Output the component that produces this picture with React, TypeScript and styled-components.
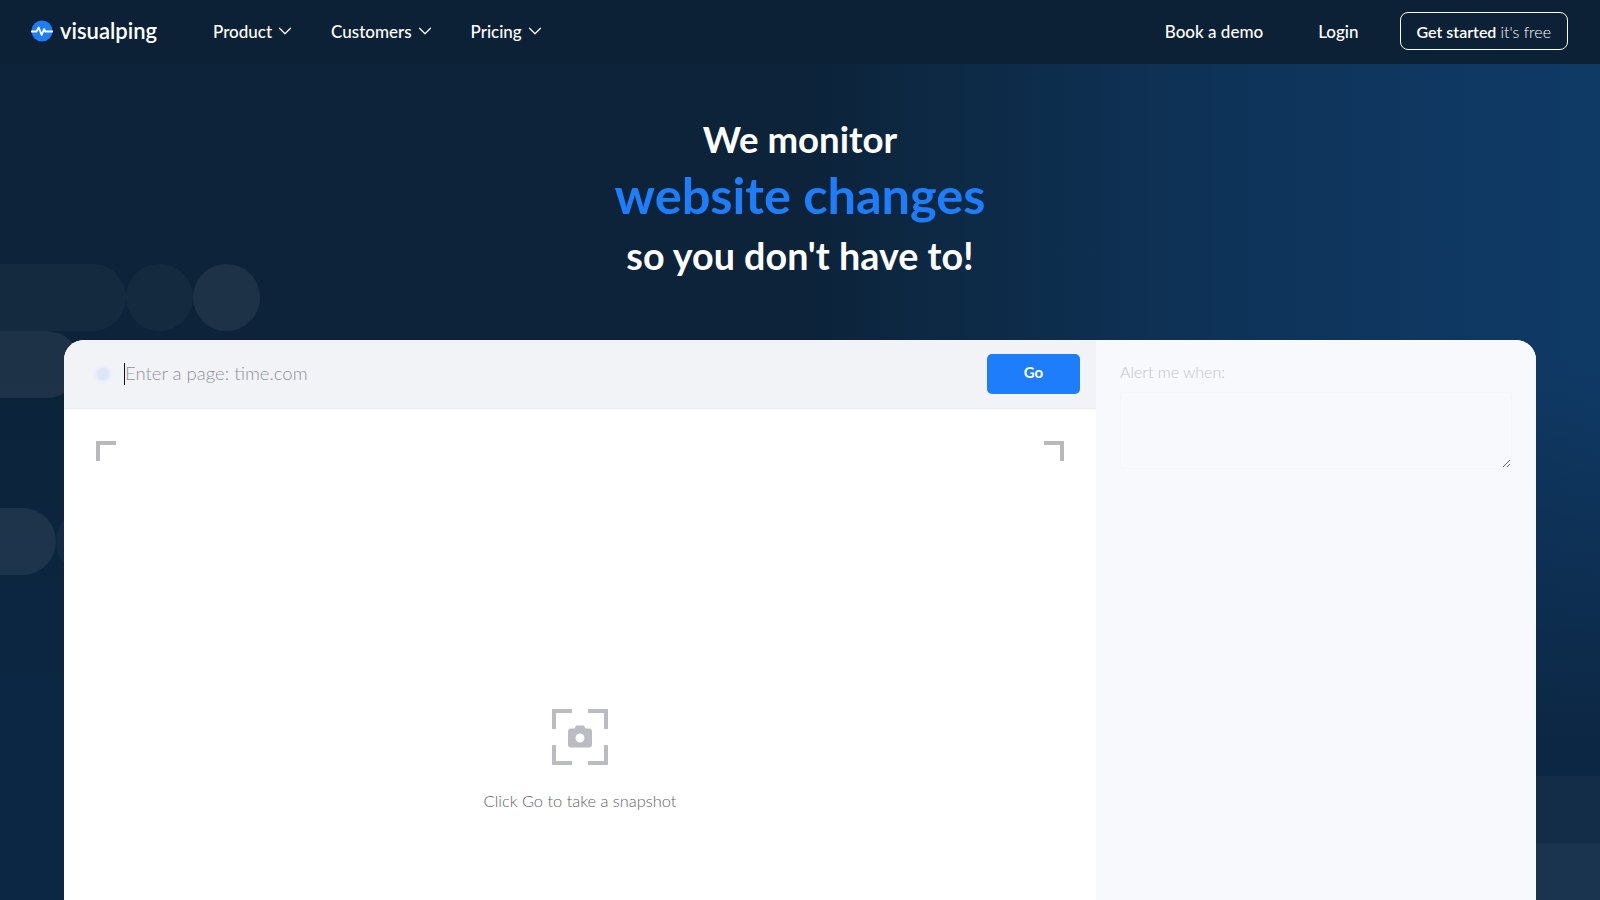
import React from 'react';
import styled, { createGlobalStyle } from 'styled-components';
import { ChevronDown } from 'lucide-react';

const GlobalStyle = createGlobalStyle`
  html, body {
    margin: 0;
    height: 100%;
    overflow: hidden;
    background: #0c2339;
  }
  * {
    box-sizing: border-box;
  }
`;

const NAV_LINKS = ['Product', 'Customers', 'Pricing'];

const BLOBS = [
  { left: -60, top: 264, width: 186, tint: 0.035 },
  { left: 126, top: 264, width: 67, tint: 0.035 },
  { left: 193, top: 264, width: 67, tint: 0.07 },
  { left: -60, top: 331, width: 140, tint: 0.07 },
  { left: -60, top: 508, width: 116, tint: 0.07 },
  { left: 56, top: 508, width: 67, tint: 0.03 },
  { left: 1500, top: 776, width: 200, tint: 0.03 },
  { left: 1500, top: 843, width: 200, tint: 0.06 },
];

const App = () => {
  return (
    <Page>
      <GlobalStyle />
      {BLOBS.map((blob) => (
        <Blob
          key={`${blob.left}-${blob.top}`}
          $left={blob.left}
          $top={blob.top}
          $width={blob.width}
          $tint={blob.tint}
        />
      ))}
      <Navbar>
        <Logo href="#">
          <LogoMark />
          <LogoText>visualping</LogoText>
        </Logo>
        <MainLinks>
          {NAV_LINKS.map((link) => (
            <NavLink key={link} href="#">
              {link}
              <ChevronDown size={22} strokeWidth={1.3} />
            </NavLink>
          ))}
        </MainLinks>
        <SideLinks>
          <NavLink href="#">Book a demo</NavLink>
          <NavLink href="#">Login</NavLink>
          <StartButton href="#">
            Get started <StartNote>it's free</StartNote>
          </StartButton>
        </SideLinks>
      </Navbar>
      <Hero>
        <HeroLine $size={36.6}>We monitor</HeroLine>
        <HeroAccent>website changes</HeroAccent>
        <HeroLine $size={37.7}>so you don't have to!</HeroLine>
      </Hero>
      <Card>
        <MainPane>
          <UrlBar>
            <PulseDot />
            <UrlField>
              <UrlInput placeholder="Enter a page: time.com" />
            </UrlField>
            <GoButton>Go</GoButton>
          </UrlBar>
          <Preview>
            <CornerRow>
              <Corner />
              <Corner $right />
            </CornerRow>
            <EmptyState>
              <SnapshotIcon />
              <EmptyText>Click Go to take a snapshot</EmptyText>
            </EmptyState>
          </Preview>
        </MainPane>
        <SidePane>
          <AlertLabel>Alert me when:</AlertLabel>
          <AlertInput />
        </SidePane>
      </Card>
    </Page>
  );
};

export default App;

const LogoMark = () => (
  <svg width="22" height="22" viewBox="0 0 22 22" fill="none">
    <circle cx="11" cy="11" r="10.5" fill="#1e7dfb" />
    <path
      d="M0.5 11.5h5l2.2-4 3 7.5 2.4-6 1.2 2.5h7.2"
      stroke="#fff"
      strokeWidth="1.8"
      strokeLinecap="round"
      strokeLinejoin="round"
    />
  </svg>
);

const SnapshotIcon = () => (
  <svg width="56" height="56" viewBox="0 0 56 56" fill="none">
    <path
      d="M2 20V2H20M36 2H54V20M54 36V54H36M20 54H2V36"
      stroke="#babcc1"
      strokeWidth="4"
    />
    <path
      fillRule="evenodd"
      clipRule="evenodd"
      d="M22.5 19.5l1.6-3h7.8l1.6 3h3.5a3 3 0 0 1 3 3v13a3 3 0 0 1-3 3H19a3 3 0 0 1-3-3v-13a3 3 0 0 1 3-3h3.5zM28 33.5a4.5 4.5 0 1 0 0-9 4.5 4.5 0 0 0 0 9z"
      fill="#babcc1"
    />
  </svg>
);

const Page = styled.div`
  position: relative;
  height: 900px;
  overflow: hidden;
  display: flex;
  flex-direction: column;
  font-family: Lato, "Noto Sans", sans-serif;
  background:
    linear-gradient(180deg, rgba(12, 39, 68, 0) 40%, #0c2744 82%),
    linear-gradient(90deg, #0c2339 0%, #0c2339 50%, #0d2c4a 64%, #0e3359 77%, #0f3a66 100%);
`;

const Blob = styled.div<{ $left: number; $top: number; $width: number; $tint: number }>`
  position: absolute;
  left: ${(p) => p.$left}px;
  top: ${(p) => p.$top}px;
  width: ${(p) => p.$width}px;
  height: 67px;
  border-radius: 34px;
  background: rgba(255, 255, 255, ${(p) => p.$tint});
`;

const Navbar = styled.nav`
  position: relative;
  flex: none;
  height: 64px;
  display: flex;
  align-items: center;
  padding: 0 32px 2px 31px;
  background: #0c2135;
`;

const Logo = styled.a`
  display: flex;
  align-items: center;
  gap: 7px;
  width: 182px;
  color: #fff;
  text-decoration: none;
`;

const LogoText = styled.span`
  font-size: 22px;
  font-weight: 600;
  line-height: 1;
`;

const MainLinks = styled.div`
  display: flex;
  gap: 35px;
`;

const SideLinks = styled.div`
  display: flex;
  align-items: center;
  gap: 55px;
  margin-left: auto;
`;

const NavLink = styled.a`
  display: flex;
  align-items: center;
  gap: 2px;
  color: #fff;
  font-size: 17px;
  font-weight: 500;
  text-decoration: none;
`;

const StartButton = styled.a`
  margin-left: -14px;
  height: 38px;
  padding: 0 16px;
  display: flex;
  align-items: center;
  gap: 4px;
  color: #fff;
  font-size: 16px;
  font-weight: 600;
  text-decoration: none;
  border: 1px solid #fff;
  border-radius: 8px;
`;

const StartNote = styled.span`
  font-weight: 300;
`;

const Hero = styled.header`
  position: relative;
  flex: none;
  height: 276px;
  padding-top: 50px;
  text-align: center;
  color: #fff;
`;

const HeroLine = styled.h1<{ $size: number }>`
  margin: 0;
  font-size: ${(p) => p.$size}px;
  font-weight: 700;
  line-height: 50px;
`;

const HeroAccent = styled.h2`
  margin: 3px 0 8px;
  font-size: 50.5px;
  font-weight: 700;
  line-height: 56px;
  color: #1e7dfb;
`;

const Card = styled.section`
  position: relative;
  flex: none;
  width: 1472px;
  height: 760px;
  margin-left: 64px;
  display: flex;
  overflow: hidden;
  border-radius: 20px 20px 0 0;
  background: #fff;
`;

const MainPane = styled.div`
  width: 1032px;
  display: flex;
  flex-direction: column;
`;

const UrlBar = styled.div`
  height: 69px;
  padding: 0 16px 0 32px;
  display: flex;
  align-items: center;
  background: #f2f3f7;
  border-bottom: 1px solid #e8e9ed;
`;

const PulseDot = styled.span`
  width: 12px;
  height: 12px;
  margin: 0 15px 0 1px;
  border-radius: 50%;
  background: #dce6f8;
  box-shadow: 0 0 4px 1px #dce6f8;
`;

const UrlField = styled.div`
  flex: 1;
  display: flex;
  align-items: center;
  border-left: 1px solid #111;
  height: 22px;
`;

const UrlInput = styled.input`
  width: 100%;
  padding: 0 0 2px;
  border: none;
  outline: none;
  background: transparent;
  font-family: inherit;
  font-size: 18.5px;
  font-weight: 300;
  &::placeholder {
    color: #8f929a;
    opacity: 1;
  }
`;

const GoButton = styled.button`
  width: 93px;
  height: 40px;
  padding: 0 0 4px;
  border: none;
  border-radius: 5px;
  background: #1e7dfb;
  color: #fff;
  font-family: inherit;
  font-size: 15px;
  font-weight: 700;
`;

const Preview = styled.div`
  flex: 1;
  display: flex;
  flex-direction: column;
  padding: 32px 32px 0;
`;

const CornerRow = styled.div`
  display: flex;
  justify-content: space-between;
`;

const Corner = styled.span<{ $right?: boolean }>`
  width: 20px;
  height: 20px;
  border-top: 4px solid #b9b9bb;
  ${(p) => (p.$right ? 'border-right' : 'border-left')}: 4px solid #b9b9bb;
`;

const EmptyState = styled.div`
  margin-top: 248px;
  display: flex;
  flex-direction: column;
  align-items: center;
  gap: 26px;
`;

const EmptyText = styled.p`
  margin: 0;
  font-size: 16.4px;
  font-weight: 300;
  line-height: 20px;
  color: #5f6167;
`;

const SidePane = styled.aside`
  flex: 1;
  padding: 22px 24px;
  background: #f8f9fd;
`;

const AlertLabel = styled.label`
  display: block;
  margin-bottom: 10px;
  font-size: 16px;
  font-weight: 300;
  line-height: 20px;
  color: #c2c3c8;
`;

const AlertInput = styled.textarea`
  display: block;
  width: 392px;
  height: 77px;
  border: 1px solid #f4f5f9;
  border-radius: 4px;
  outline: none;
  background: #f8f9fd;
`;
